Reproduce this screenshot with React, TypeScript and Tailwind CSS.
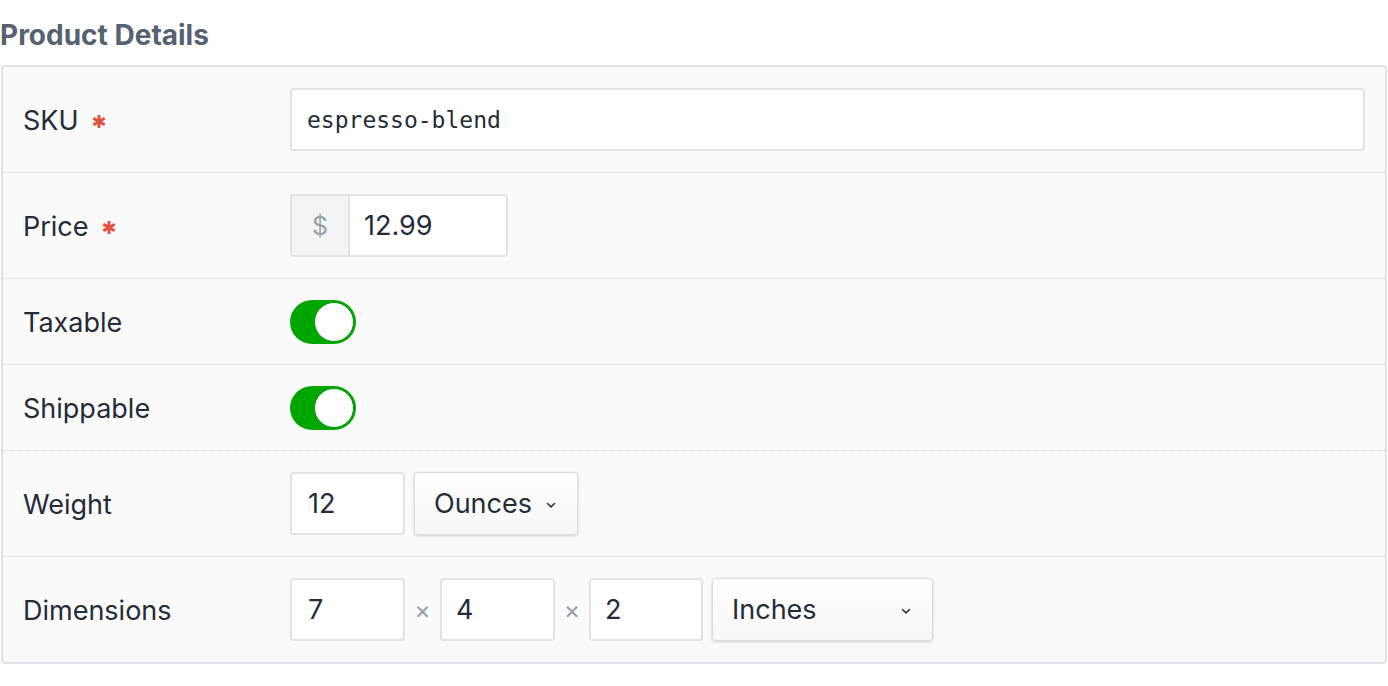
import React from 'react';

const font = { fontFamily: 'Inter, "Liberation Sans", Arial, sans-serif' };

const Required = () => (
  <span className="ml-[13px] text-[18px] leading-none text-[#e0523f] relative top-[1px]" style={{ fontFamily: '"DejaVu Sans", sans-serif' }}>
    ✱
  </span>
);

const Toggle = () => (
  <div className="w-[66px] h-[44px] rounded-full bg-[#00a600] flex items-center justify-end p-[2px]">
    <div className="w-[40px] h-[40px] rounded-full bg-white border-[1px] border-[#0a9a0a]" />
  </div>
);

const Chevron = () => (
  <svg width="12" height="8" viewBox="0 0 12 8" fill="none" stroke="#2d3540" strokeWidth="1.6" strokeLinecap="round" strokeLinejoin="round">
    <path d="M2.5 2.5 L6 5.8 L9.5 2.5" />
  </svg>
);

const Row = ({ label, req, children, last, tight }: { label: string; req?: boolean; children: React.ReactNode; last?: boolean; tight?: boolean }) => (
  <div
    className={`grid grid-cols-[267px_1fr] items-center pl-[20px] pr-[20px] ${tight ? 'pt-[21px] pb-[20px]' : 'py-[21px]'} ${last ? '' : 'border-b border-dotted border-[#d0d0d0]'}`}
  >
    <div className="text-[27px] text-[#242c38] flex items-center pt-[3px]">
      {label}
      {req && <Required />}
    </div>
    <div className="flex items-center">{children}</div>
  </div>
);

const boxBase = 'h-[63px] bg-white border-2 border-[#e3e3e3] rounded-[4px] text-[#242c38] flex items-center pt-[2px]';
const boxInput = `${boxBase} text-[27px]`;

const Select = ({ text, width }: { text: string; width: string }) => (
  <div className={`${width} h-[63px] rounded-[4px] border border-[#dcdcdc] bg-gradient-to-b from-white to-[#f7f7f7] shadow-[0_1px_3px_rgba(0,0,0,0.18)] flex items-center justify-between pl-[19px] pr-[20px] pt-[2px] text-[27px] text-[#242c38]`}>
    <span>{text}</span>
    <Chevron />
  </div>
);

const Times = ({ w }: { w: string }) => <span className={`${w} text-center text-[25px] text-[#9aa1aa] pt-[2px]`}>×</span>;

export default function App() {
  return (
    <div className="w-[1388px] h-[686px] bg-white" style={font}>
      <h2 className="text-[28px] font-bold text-[#566272] pt-[17px] h-[65px] leading-[36px]">Product Details</h2>
      <div className="mx-px border-2 border-[#e0e3e7] rounded-[4px] bg-[#fafafa]">
        <Row label="SKU" req>
          <div className={`${boxBase} w-full pl-[15px] text-[23px]`} style={{ fontFamily: '"DejaVu Sans Mono", "Liberation Mono", monospace' }}>
            espresso-blend
          </div>
        </Row>
        <Row label="Price" req>
          <div className="h-[63px] w-[218px] flex border-2 border-[#e3e3e3] rounded-[4px] overflow-hidden">
            <div className="w-[58px] bg-[#f3f4f6] border-r-2 border-[#e3e3e3] flex items-center justify-center pt-[2px] text-[25px] text-[#9aa1aa]">$</div>
            <div className="flex-1 bg-white flex items-center pl-[14px] pt-[2px] text-[27px] text-[#242c38]">12.99</div>
          </div>
        </Row>
        <Row label="Taxable" tight>
          <Toggle />
        </Row>
        <Row label="Shippable" tight>
          <Toggle />
        </Row>
        <Row label="Weight">
          <div className={`${boxInput} w-[115px] pl-[16px]`}>12</div>
          <div className="w-[9px]" />
          <Select text="Ounces" width="w-[164px]" />
        </Row>
        <Row label="Dimensions" last>
          <div className={`${boxInput} w-[115px] pl-[16px]`}>7</div>
          <Times w="w-[35px]" />
          <div className={`${boxInput} w-[115px] pl-[14px]`}>4</div>
          <Times w="w-[34px]" />
          <div className={`${boxInput} w-[114px] pl-[14px]`}>2</div>
          <div className="w-[9px]" />
          <Select text="Inches" width="w-[221px]" />
        </Row>
      </div>
    </div>
  );
}
